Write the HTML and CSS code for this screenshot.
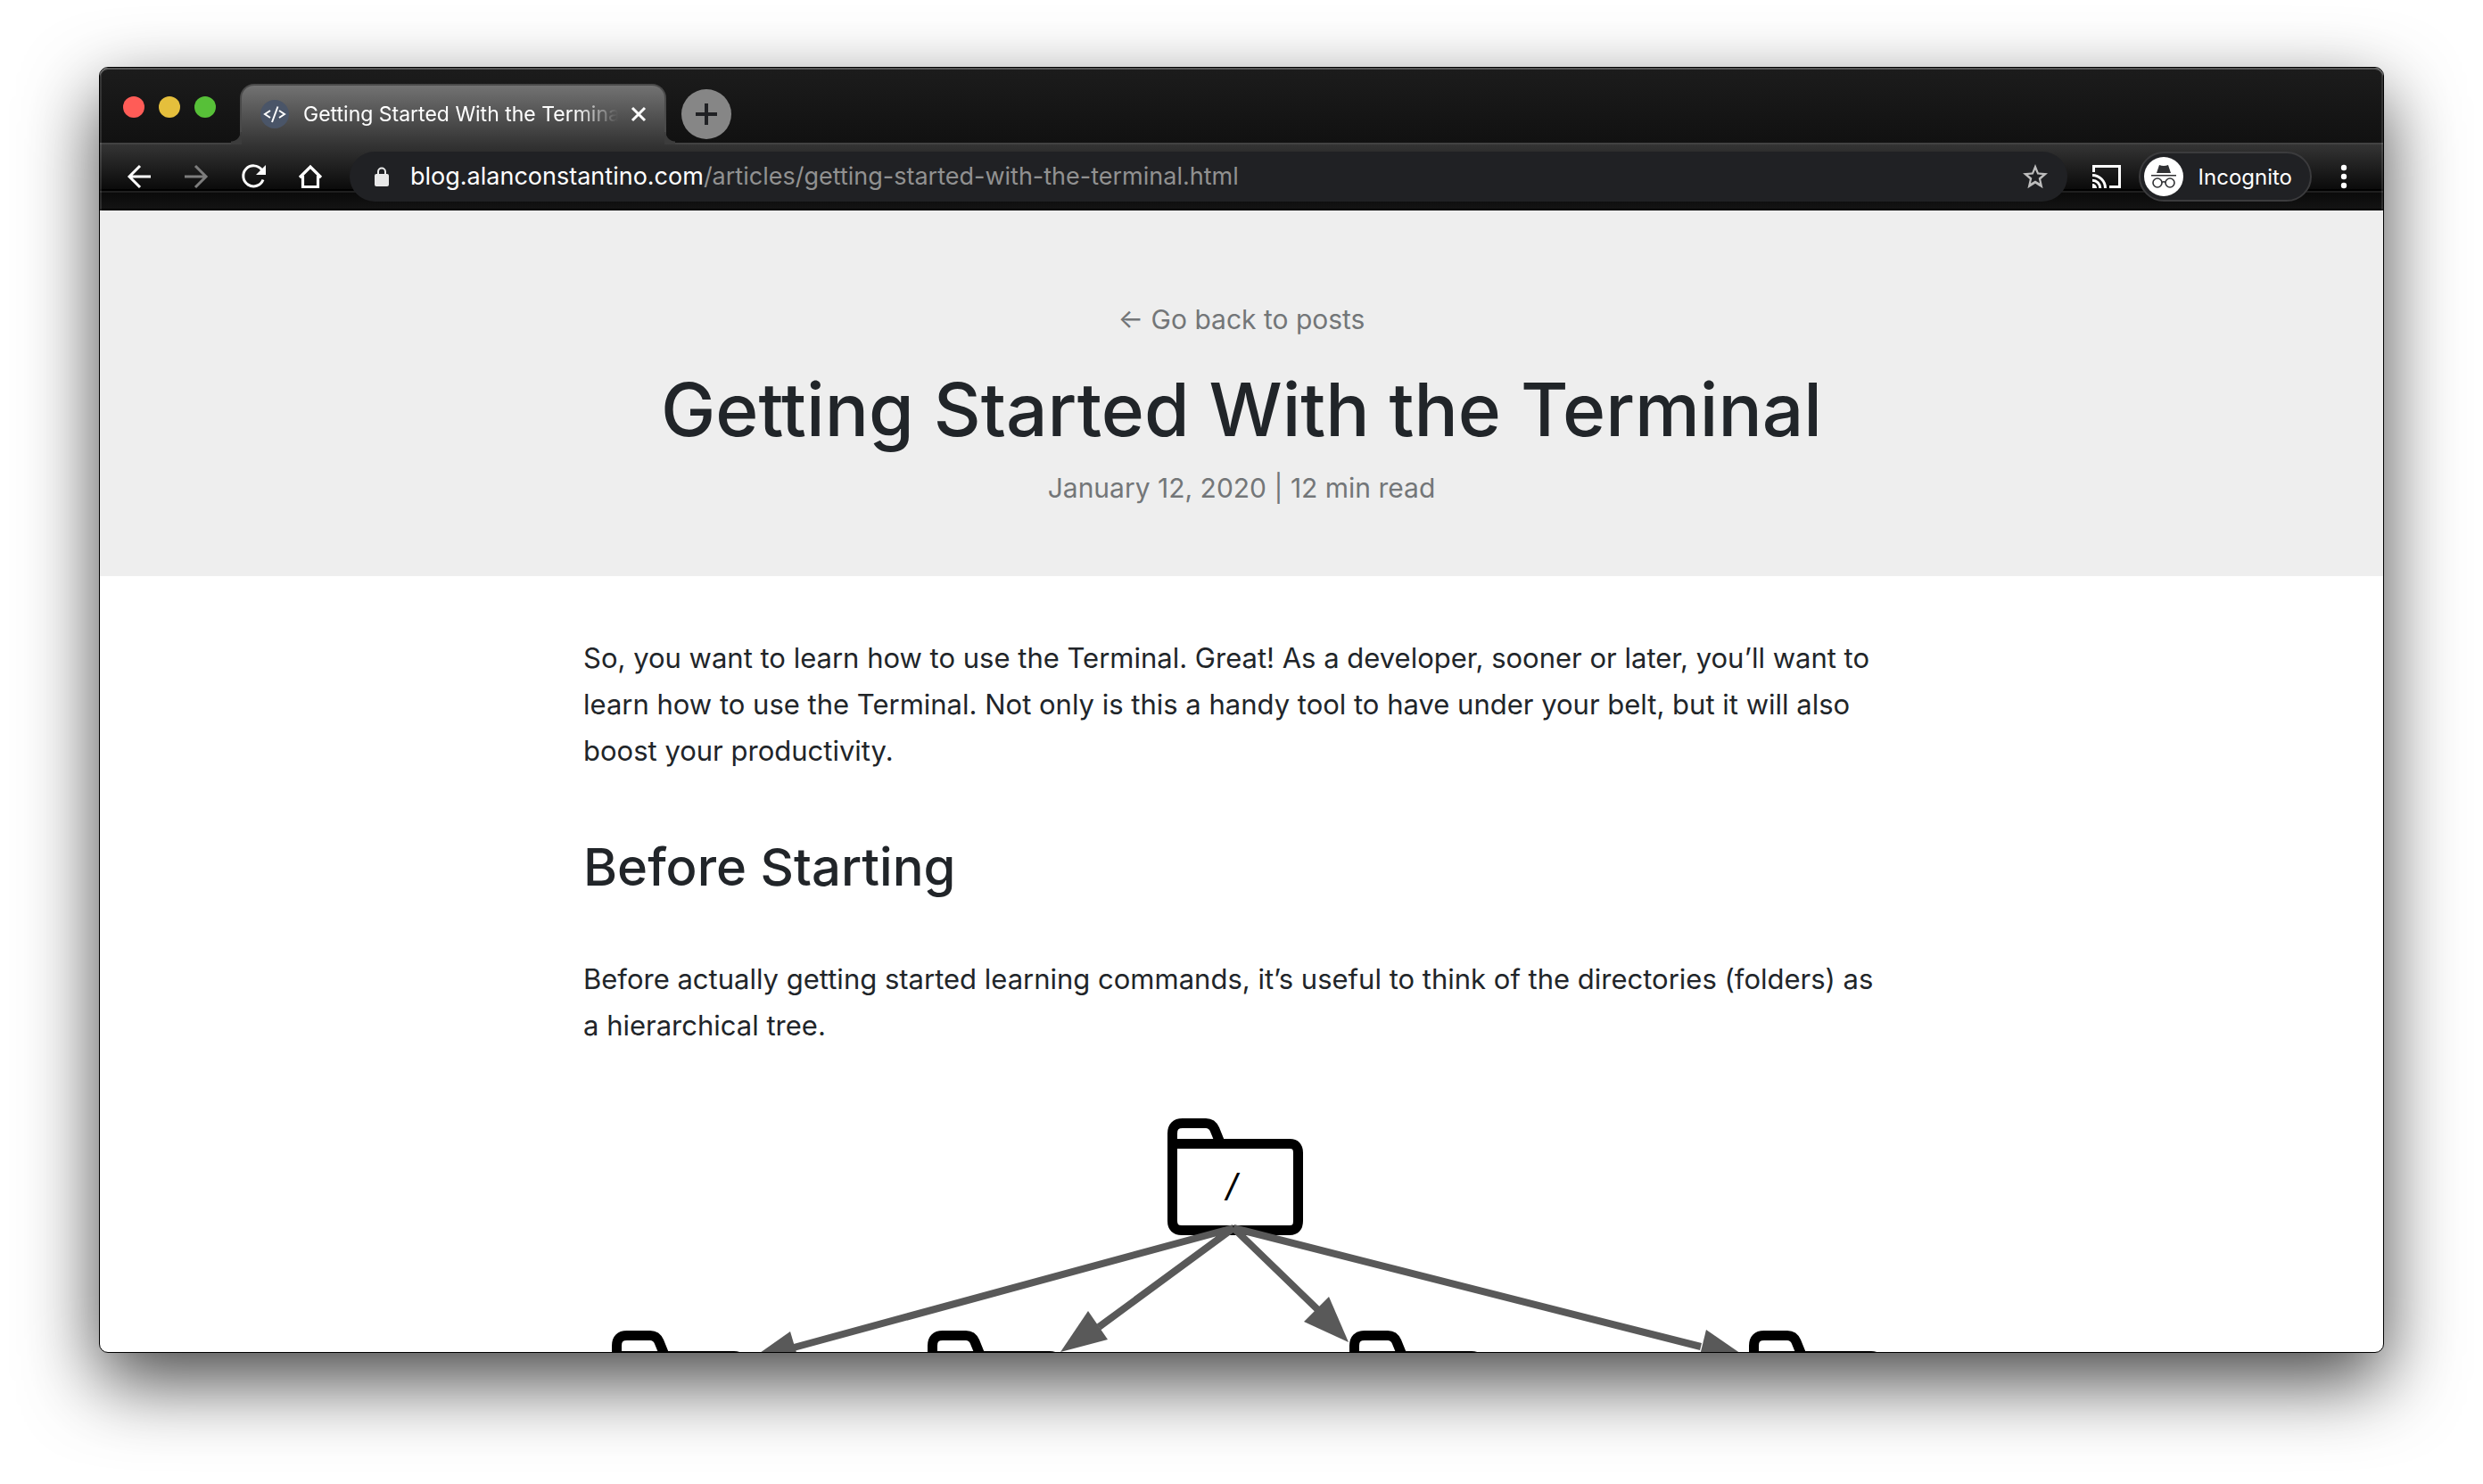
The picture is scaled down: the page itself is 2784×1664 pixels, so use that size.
FILE: index.html
```html
<!DOCTYPE html>
<html lang="en">
<head>
<meta charset="utf-8">
<meta name="viewport" content="width=device-width, initial-scale=1">
<title>Getting Started With the Terminal</title>
<link rel="stylesheet" href="styles.css">
</head>
<body>
<div class="window">
  <div class="chrome">
    <div class="tabstrip">
      <div class="lights">
        <button class="light light-close" type="button" aria-label="Close"></button>
        <button class="light light-minimize" type="button" aria-label="Minimize"></button>
        <button class="light light-zoom" type="button" aria-label="Zoom"></button>
      </div>
      <div class="tab">
        <svg class="favicon" viewBox="0 0 32 32" aria-hidden="true">
          <circle cx="16" cy="16" r="16" fill="#4a5568"/>
          <path d="M11 12 5 16l6 4M19.500 7.500 13 25M21 12l6 4-6 4" fill="none" stroke="#fff" stroke-width="2"/>
        </svg>
        <span class="tab-title">Getting Started With the Terminal</span>
        <button class="tab-close" type="button" aria-label="Close tab">
          <svg viewBox="0 0 18 18"><path d="M2 2l14 14M16 2 2 16" fill="none" stroke="#fff" stroke-width="3"/></svg>
        </button>
      </div>
      <button class="new-tab" type="button" aria-label="New tab">
        <svg viewBox="0 0 24 24"><path d="M12 0v24M0 12h24" fill="none" stroke="#202124" stroke-width="4"/></svg>
      </button>
    </div>
    <div class="toolbar">
      <div class="nav">
        <button class="icon-button" type="button" aria-label="Back">
          <svg viewBox="0 0 32 32"><path d="M29 16H5M17 4 5 16l12 12" fill="none" stroke="#fff" stroke-width="3"/></svg>
        </button>
        <button class="icon-button" type="button" aria-label="Forward">
          <svg viewBox="0 0 32 32"><path d="M3 16h24M15 4l12 12-12 12" fill="none" stroke="#7d7d7d" stroke-width="3"/></svg>
        </button>
        <button class="icon-button" type="button" aria-label="Reload">
          <svg viewBox="0 0 32 32"><path d="M25.500 8.500A11.500 11.500 0 1 0 27 19.500" fill="none" stroke="#fff" stroke-width="3"/><path d="M30 3v11H19z" fill="#fff"/></svg>
        </button>
        <button class="icon-button" type="button" aria-label="Home">
          <svg viewBox="0 0 32 32"><path d="M4 17 16 5l12 12M7.500 15v12.500h17V15" fill="none" stroke="#fff" stroke-width="3.200"/></svg>
        </button>
      </div>
      <div class="omnibox">
        <svg class="lock" viewBox="0 0 16 22" aria-hidden="true"><rect y="8" width="16" height="14" rx="2" fill="#e8e8e8"/><path d="M4 9V5.500a4 4 0 0 1 8 0V9" fill="none" stroke="#e8e8e8" stroke-width="2"/></svg>
        <div class="url" role="textbox" tabindex="0" aria-label="Address"><span class="url-host">blog.alanconstantino.com</span>/articles/getting-started-with-the-terminal.html</div>
        <button class="icon-button" type="button" aria-label="Bookmark this page">
          <svg viewBox="0 0 24 24"><path fill="#bdbdbd" d="M22.500 9.240l-7.690-.66L12 1.500 9.190 8.590 1.500 9.240l5.830 5.050L5.580 22 12 17.770 18.420 22l-1.740-7.710zM12 15.400l-3.760 2.270 1-4.280-3.320-2.880 4.380-.38L12 6.100l1.710 4.040 4.380.38-3.320 2.880 1 4.280z"/></svg>
        </button>
      </div>
      <button class="icon-button" type="button" aria-label="Cast">
        <svg viewBox="0 0 32 26"><path d="M1.500 8V1.500h29v23H19" fill="none" stroke="#fff" stroke-width="3"/><path d="M0 21a5 5 0 0 1 5 5H0z" fill="#fff"/><path d="M0 17.200A8.800 8.800 0 0 1 8.800 26M0 11.500A14.500 14.500 0 0 1 14.500 26" fill="none" stroke="#fff" stroke-width="3"/></svg>
      </button>
      <button class="incognito" type="button">
        <svg viewBox="0 0 44 44" aria-hidden="true">
          <circle cx="22" cy="22" r="22" fill="#fff"/>
          <path d="M14 18l3-9q5 2 10 0l3 9z" fill="#303134"/>
          <path d="M8 20.800h28" stroke="#303134" stroke-width="1.600"/>
          <g fill="none" stroke="#303134" stroke-width="1.600"><circle cx="15" cy="29" r="5"/><circle cx="29" cy="29" r="5"/><path d="M20 28.500q2-1.500 4 0"/></g>
        </svg>
        <span>Incognito</span>
      </button>
      <button class="icon-button" type="button" aria-label="Menu">
        <svg viewBox="0 0 32 32" fill="#fff"><circle cx="16" cy="6" r="3.200"/><circle cx="16" cy="16" r="3.200"/><circle cx="16" cy="26" r="3.200"/></svg>
      </button>
    </div>
  </div>

  <div class="page">
    <header class="hero">
      <a class="meta" href="#posts">← Go back to posts</a>
      <h1>Getting Started With the Terminal</h1>
      <p class="meta">January 12, 2020 | 12 min read</p>
    </header>
    <main class="article">
      <p>So, you want to learn how to use the Terminal. Great! As a developer, sooner or later, you’ll want to learn how to use the Terminal. Not only is this a handy tool to have under your belt, but it will also boost your productivity.</p>
      <h2>Before Starting</h2>
      <p>Before actually getting started learning commands, it’s useful to think of the directories (folders) as<br>a hierarchical tree.</p>
      <svg class="tree" viewBox="0 0 1476 420" role="img" aria-label="Directory tree">
        <defs>
          <g id="folder" fill="none" stroke="#000" stroke-width="11">
            <path d="M5.500 28.500H137q9.500 0 9.500 10V115q0 10.500-9.500 10.500H16q-10.500 0-10.500-10.500V17Q5.500 5.500 17 5.500H43q7 0 10 7l6.500 16"/>
          </g>
        </defs>
        <use href="#folder" x="655" y="13"/>
        <text class="folder-name" x="721" y="105">/</text>
        <use href="#folder" x="32" y="251"/>
        <use href="#folder" x="386" y="251"/>
        <use href="#folder" x="859" y="251"/>
        <use href="#folder" x="1307" y="251"/>
        <g stroke="#595959" stroke-width="8" fill="none">
          <path d="M729 136 236 270M729 136 578 247M729 136 823 227M729 136 1253 269"/>
        </g>
        <g fill="#595959">
          <path d="M188 283 232 252 243 289z"/>
          <path d="M535 275 566 229 588 261z"/>
          <path d="M858 264 836 213 808 241z"/>
          <path d="M1304 281 1259 250 1250 287z"/>
        </g>
      </svg>
    </main>
  </div>
</div>
</body>
</html>
```
FILE: styles.css
```css
* { box-sizing: border-box; }

body {
  margin: 0;
  height: 100vh;
  display: flex;
  padding: 75px 111px 147px;
  background: #fff;
  color: #212529;
  font-family: Inter, "Liberation Sans", sans-serif;
  overflow: hidden;
}

button {
  padding: 0;
  border: 0;
  background: none;
  color: inherit;
  font: inherit;
}

svg { display: block; }

.window {
  flex: 1;
  min-width: 0;
  display: flex;
  flex-direction: column;
  border: 1px solid #000;
  border-radius: 10px;
  overflow: hidden;
  background: #fff;
  box-shadow: 0 32px 84px rgba(0, 0, 0, 0.72);
}

/* Browser frame */
.chrome {
  position: relative;
  flex: none;
  color: #fff;
}

.chrome::after {
  content: "";
  position: absolute;
  inset: 0;
  border-radius: 9px 9px 0 0;
  box-shadow: inset 0 2px 0 rgba(255, 255, 255, 0.25), inset 2px 0 0 rgba(255, 255, 255, 0.12), inset -2px 0 0 rgba(255, 255, 255, 0.12);
  pointer-events: none;
}

.tabstrip {
  display: flex;
  align-items: flex-end;
  height: 84px;
  padding-left: 26px;
  background: linear-gradient(#1c1c1c, #111);
}

.lights {
  display: flex;
  gap: 16px;
  margin-bottom: 28px;
}

.light {
  width: 24px;
  height: 24px;
  border-radius: 50%;
}

.light-close { background: #ff5c57; }
.light-minimize { background: #e5bf3c; }
.light-zoom { background: #57c038; }

.tab {
  position: relative;
  display: flex;
  align-items: center;
  width: 478px;
  height: 68px;
  margin: 0 0 -2px 27px;
  padding: 0 20px 2px 21px;
  border: 2px solid #4a4a4a;
  border-bottom: 0;
  border-radius: 16px 16px 0 0;
  background: linear-gradient(#727272, #343434);
}

/* Curved feet where the tab meets the toolbar */
.tab::before,
.tab::after {
  content: "";
  position: absolute;
  bottom: 0;
  width: 12px;
  height: 14px;
}

.tab::before {
  right: 100%;
  background: radial-gradient(circle at 0 0, transparent 10px, #3c3c3c 11px);
}

.tab::after {
  left: 100%;
  background: radial-gradient(circle at 100% 0, transparent 10px, #3c3c3c 11px);
}

.favicon {
  flex: none;
  width: 32px;
  height: 32px;
}

.tab-title {
  flex: 1;
  margin-left: 16px;
  font-size: 23px;
  line-height: 32px;
  white-space: nowrap;
  overflow: hidden;
  -webkit-mask-image: linear-gradient(to left, transparent, #000 48px);
  mask-image: linear-gradient(to left, transparent, #000 48px);
}

.tab-close {
  width: 18px;
  margin-left: 14px;
}

.new-tab {
  display: grid;
  place-items: center;
  width: 56px;
  height: 56px;
  margin: 0 0 4px 17px;
  border-radius: 50%;
  background: #868686;
}

.new-tab svg { width: 24px; }

.toolbar {
  display: flex;
  align-items: center;
  gap: 20px;
  height: 76px;
  padding: 0 28px;
  border-top: 2px solid #424242;
  border-bottom: 2px solid #000;
  background: linear-gradient(#343434 0, #161616 36px, #0b0b0b 50px, #000 50px, #000 52px, #1f1f1f 52px, #1f1f1f 54px, #0a0a0a 54px, #131313 72px);
}

.nav {
  display: flex;
  gap: 32px;
}

.icon-button {
  flex: none;
  width: 32px;
}

.omnibox {
  flex: 1;
  min-width: 0;
  display: flex;
  align-items: center;
  height: 56px;
  margin: 0 8px;
  padding: 0 20px 0 28px;
  border-radius: 28px;
  background: #202124;
}

.lock {
  flex: none;
  width: 16px;
}

.url {
  flex: 1;
  margin-left: 24px;
  font-size: 27px;
  line-height: 40px;
  white-space: nowrap;
  overflow: hidden;
  color: #919191;
}

.url-host { color: #fff; }

.incognito {
  display: flex;
  align-items: center;
  gap: 17px;
  height: 56px;
  padding: 0 20px 0 4px;
  border: 2px solid #3b3b3d;
  border-radius: 28px;
  background: #202124;
  font-size: 24px;
}

.incognito svg { width: 44px; }

/* Article page */
.page {
  flex: 1;
  min-height: 0;
  overflow: hidden;
}

.hero {
  padding: 100px 24px 76px;
  background: #eee;
  text-align: center;
}

.meta {
  display: block;
  margin: 0;
  color: #737678;
  font-size: 30px;
  line-height: 45px;
  text-decoration: none;
}

h1 {
  margin: 29px 0 16px;
  font-size: 82px;
  font-weight: 500;
  line-height: 99px;
}

.article {
  max-width: 1476px;
  margin: 0 auto;
  padding-top: 66px;
}

.article p {
  margin: 0;
  font-size: 31px;
  line-height: 52px;
}

h2 {
  margin: 69px 0 65px;
  font-size: 58px;
  font-weight: 500;
  line-height: 70px;
}

.tree {
  width: 100%;
  margin-top: 65px;
}

.folder-name {
  font: italic 42px "Liberation Sans", sans-serif;
}
```
